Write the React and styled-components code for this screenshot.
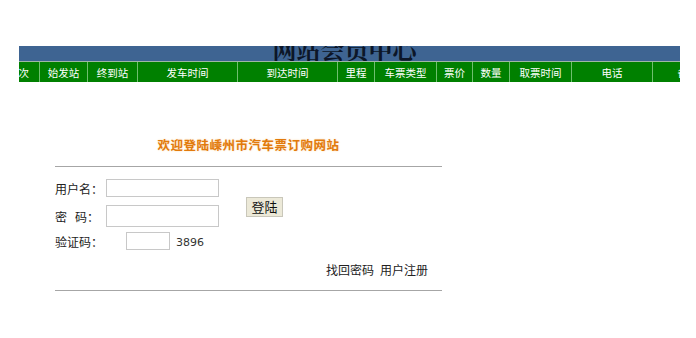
import React from "react";
import styled, { createGlobalStyle } from "styled-components";

const Global = createGlobalStyle`
  html, body { margin: 0; padding: 0; background: #fff; }
  body { font-family: "Noto Sans CJK SC", "DejaVu Sans", sans-serif; color: #222; }
`;

const Page = styled.div`
  padding-top: 46px;
`;

const Header = styled.div`
  margin-left: 19px;
  width: 661px;
  overflow: hidden;
`;

const Banner = styled.div`
  height: 15px;
  background: #3e6492;
  overflow: hidden;
  display: flex;
  justify-content: center;
`;

const BannerTitle = styled.div`
  font-family: "Noto Serif CJK SC", "Noto Sans CJK SC", serif;
  font-size: 24px;
  font-weight: bold;
  line-height: 24px;
  margin-top: -9px;
  margin-right: 10px;
  color: #0c1628;
`;

const NavRow = styled.div`
  display: flex;
  height: 20px;
  background: #008000;
  border-top: 1px solid #9fb7a5;
  overflow: hidden;
`;

const NavCell = styled.div`
  flex: 0 0 ${(p) => p.$w}px;
  margin-left: ${(p) => p.$ml || 0}px;
  border-right: 1px solid #6fbf6f;
  box-sizing: border-box;
  display: flex;
  align-items: center;
  justify-content: center;
  color: #fff;
  font-size: 10.5px;
  white-space: nowrap;
  &:last-child { border-right: none; }
`;

const Main = styled.div`
  margin-left: 55px;
  width: 387px;
  padding-top: 54px;
`;

const Title = styled.div`
  text-align: center;
  font-size: 12.5px;
  font-weight: bold;
  line-height: 18px;
  color: #e27a0c;
  text-shadow: 0 0 2px #fbd9a6;
  letter-spacing: 0.5px;
`;

const Rule = styled.div`
  height: 1px;
  background: #a6a6a6;
  margin-top: ${(p) => p.$mt}px;
`;

const FormArea = styled.div`
  display: flex;
  align-items: flex-start;
  padding-top: 12px;
`;

const Fields = styled.div`
  display: flex;
  flex-direction: column;
`;

const Row = styled.div`
  display: flex;
  align-items: center;
  margin-top: ${(p) => p.$mt || 0}px;
`;

const Label = styled.span`
  width: 51px;
  font-size: 12px;
  color: #222;
  white-space: pre;
`;

const TextBox = styled.input`
  box-sizing: border-box;
  width: ${(p) => p.$w}px;
  height: ${(p) => p.$h}px;
  margin-left: ${(p) => p.$ml || 0}px;
  border: 1px solid #c8c8c8;
  background: #fff;
  padding: 0 3px;
  outline: none;
`;

const Code = styled.span`
  margin-left: 6px;
  font-size: 11px;
  font-family: "DejaVu Sans", sans-serif;
  color: #333;
  margin-top: 2px;
`;

const LoginButton = styled.button`
  margin-left: 27px;
  margin-top: 18px;
  width: 37px;
  height: 20px;
  padding: 0;
  background: #ece9d8;
  border: 1px solid #c9c7ba;
  font-family: "Noto Sans CJK SC", sans-serif;
  font-size: 13px;
  line-height: 18px;
  color: #111;
`;

const Links = styled.div`
  display: flex;
  justify-content: flex-end;
  gap: 6px;
  padding-right: 14px;
  margin-top: 12px;
  font-size: 12px;
  line-height: 16px;
  color: #222;
`;

const columns = [
  { t: "车次", w: 42, ml: -21 },
  { t: "始发站", w: 48 },
  { t: "终到站", w: 50 },
  { t: "发车时间", w: 100 },
  { t: "到达时间", w: 100 },
  { t: "里程", w: 37 },
  { t: "车票类型", w: 62 },
  { t: "票价", w: 36 },
  { t: "数量", w: 37 },
  { t: "取票时间", w: 62 },
  { t: "电话", w: 81 },
  { t: "备注", w: 70 },
];

export default function App() {
  return (
    <Page>
      <Global />
      <Header>
        <Banner>
          <BannerTitle>网站会员中心</BannerTitle>
        </Banner>
        <NavRow>
          {columns.map((c) => (
            <NavCell key={c.t} $w={c.w} $ml={c.ml}>
              {c.t}
            </NavCell>
          ))}
        </NavRow>
      </Header>
      <Main>
        <Title>欢迎登陆嵊州市汽车票订购网站</Title>
        <Rule $mt={12} />
        <FormArea>
          <Fields>
            <Row>
              <Label>用户名：</Label>
              <TextBox $w={113} $h={18} />
            </Row>
            <Row $mt={8}>
              <Label>{"密   码："}</Label>
              <TextBox $w={113} $h={22} />
            </Row>
            <Row $mt={5}>
              <Label>验证码：</Label>
              <TextBox $w={44} $h={18} $ml={20} />
              <Code>3896</Code>
            </Row>
          </Fields>
          <LoginButton>登陆</LoginButton>
        </FormArea>
        <Links>
          <span>找回密码</span>
          <span>用户注册</span>
        </Links>
        <Rule $mt={12} />
      </Main>
    </Page>
  );
}
